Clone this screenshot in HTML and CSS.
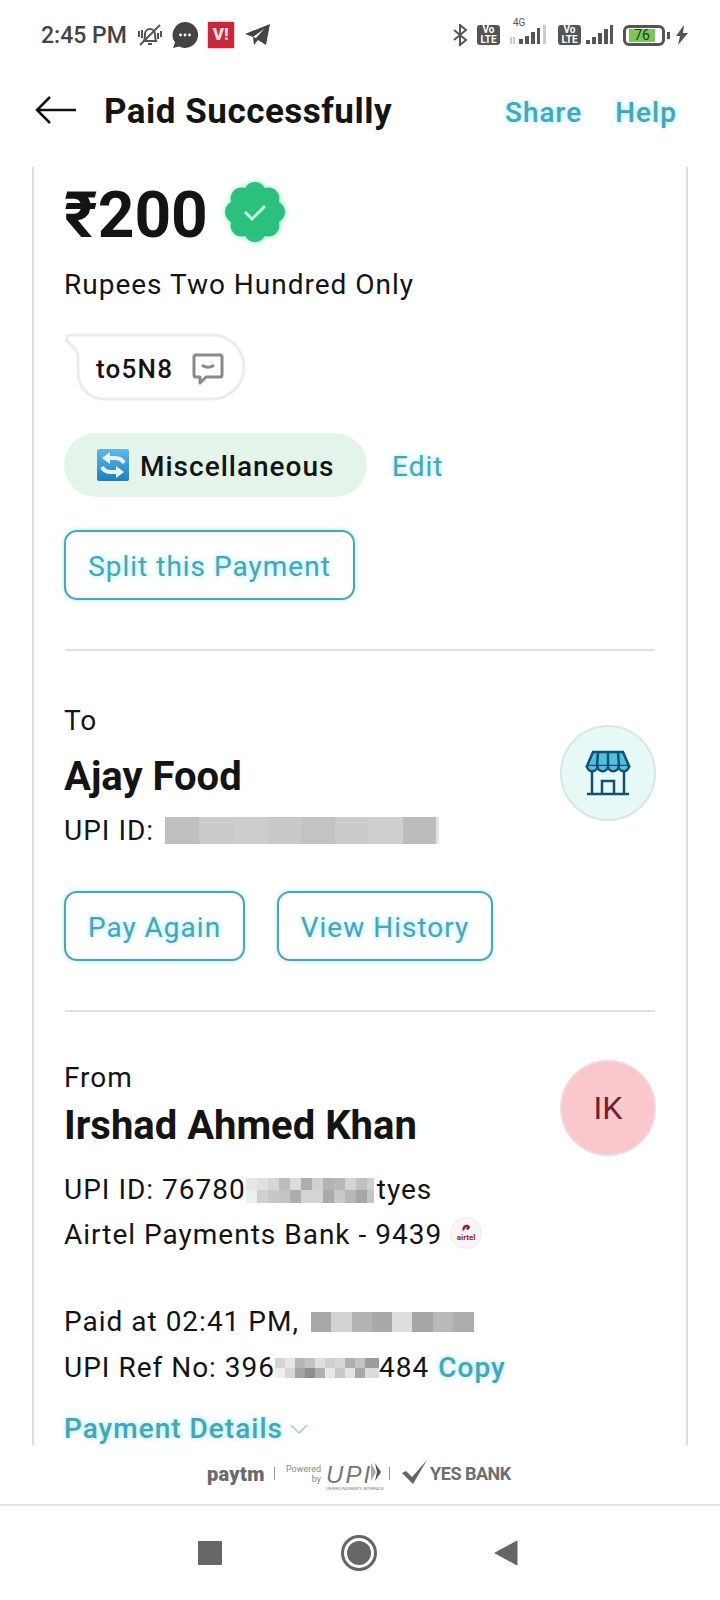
FILE: index.html
```html
<!DOCTYPE html>
<html>
	<head>
		<meta charset="UTF-8">
		<title>Paid Successfully</title>
		<link rel="stylesheet" href="styles.css">
	</head>
	<body>
		<div id="page">
			<div class="status">
				<span class="time">2:45 PM</span>
				<svg class="ic-bell" width="26" height="26" viewBox="0 0 26 26" fill="none" stroke="#555" stroke-width="2"><path d="M7 19c1-2 1-4 1-7a5 5 0 0 1 10 0c0 3 0 5 1 7z"/><path d="M11 22h4"/><path d="M3 23L23 3"/><path d="M2 9v6M5 8v8M24 9v6M21 11v6" stroke-width="2"/></svg>
				<svg class="ic-chat" width="26" height="26" viewBox="0 0 26 26"><path d="M13 0a13 13 0 1 1-6 24.500L1 26l2-5.500A13 13 0 0 1 13 0z" fill="#444"/><circle cx="8.500" cy="13" r="1.400" fill="#fff"/><circle cx="13" cy="13" r="1.400" fill="#fff"/><circle cx="17.500" cy="13" r="1.400" fill="#fff"/></svg>
				<div class="vi">V!</div>
				<svg class="ic-tg" width="25" height="22" viewBox="0 0 25 22"><path d="M25 0L21 21 13 16 9 21 8 13 0 10z" fill="#444"/><path d="M8 13L19 5 11 14z" fill="#fff"/></svg>
				<div class="status-right">
					<svg class="ic-bt" width="15" height="22" viewBox="0 0 15 22" fill="none" stroke="#555" stroke-width="2"><path d="M1 6l12 10-6 5V1l6 5L1 16"/></svg>
					<div class="volte volte-first">Vo<br>LTE</div>
					<div class="sig-wrap">
						<span class="four-g">4G</span>
						<svg width="38" height="20" viewBox="0 0 38 20"><path d="M1 12v7M4 12v7" stroke="#bbb" stroke-width="1.500"/><g fill="#555"><rect x="9" y="14" width="4" height="5"/><rect x="15" y="11" width="4" height="8"/><rect x="21" y="7" width="4" height="12"/><rect x="27" y="3" width="3" height="16"/></g><rect x="33" y="0" width="3" height="19" fill="#ccc"/></svg>
					</div>
					<div class="volte">Vo<br>LTE</div>
					<svg class="ic-sig" width="28" height="20" viewBox="0 0 28 20" fill="#555"><rect x="0" y="15" width="4" height="4"/><rect x="6" y="12" width="4" height="7"/><rect x="12" y="8" width="4" height="11"/><rect x="18" y="4" width="4" height="15"/><rect x="24" y="0" width="3" height="19"/></svg>
					<div class="batt"><span class="batt-fill">76</span></div>
					<span class="batt-nub"></span>
					<svg class="ic-bolt" width="12" height="20" viewBox="0 0 12 20"><path d="M8 0L0 11h4L2 20l10-12H7z" fill="#555"/></svg>
				</div>
			</div>

			<div class="top">
				<svg class="back" width="42" height="28" viewBox="0 0 42 28" fill="none" stroke="#111" stroke-width="2.500"><path d="M41 14H2M15 1L2 14l13 13"/></svg>
				<div class="title">Paid Successfully</div>
				<div class="link top-link top-share">Share</div>
				<div class="link top-link top-help">Help</div>
			</div>

			<div class="card">
				<div class="amount-row">
					<span class="amount">₹200</span>
					<svg class="badge" width="60" height="60" viewBox="0 0 60 60">
						<g fill="#2cc07f">
							<circle cx="30" cy="11" r="11"/><circle cx="43.400" cy="16.600" r="11"/><circle cx="49" cy="30" r="11"/><circle cx="43.400" cy="43.400" r="11"/>
							<circle cx="30" cy="49" r="11"/><circle cx="16.600" cy="43.400" r="11"/><circle cx="11" cy="30" r="11"/><circle cx="16.600" cy="16.600" r="11"/>
							<circle cx="30" cy="30" r="20"/>
						</g>
						<path d="M20 30l7 7 13-13" fill="none" stroke="#c8f7e0" stroke-width="3"/>
					</svg>
				</div>
				<div class="line words">Rupees Two Hundred Only</div>
				<div class="note">
					<svg class="note-shape" width="182" height="68" viewBox="0 0 182 68" fill="none" stroke="#ececec" stroke-width="3"><path d="M7 2H148a32 32 0 0 1 0 64H40a26 26 0 0 1-26-26V24Q14 17 3 8Q1 2 7 2Z"/></svg>
					<span class="note-text">to5N8</span>
					<svg width="32" height="32" viewBox="0 0 32 32" fill="none" stroke="#8a8a8a" stroke-width="3" stroke-linejoin="round"><path d="M4 2h24a2 2 0 0 1 2 2v18a2 2 0 0 1-2 2H14l-6 6v-6H4a2 2 0 0 1-2-2V4a2 2 0 0 1 2-2z"/><path d="M10 12c3 3 9 3 12 0"/></svg>
				</div>
				<div class="tag-row">
					<div class="tag">
						<svg width="32" height="32" viewBox="0 0 32 32">
							<defs><linearGradient id="swap" x1="0" y1="0" x2="0" y2="1"><stop offset="0" stop-color="#62b8e6"/><stop offset="1" stop-color="#1d7fbb"/></linearGradient></defs>
							<rect width="32" height="32" rx="2" fill="url(#swap)"/>
							<path d="M27 14c-2-4-5-5-9-5h-6" fill="none" stroke="#e8f1f5" stroke-width="4"/>
							<path d="M5 9l8-6v12z" fill="#e8f1f5"/>
							<path d="M5 18c2 4 5 5 9 5h6" fill="none" stroke="#e8f1f5" stroke-width="4"/>
							<path d="M27 23l-8-6v12z" fill="#e8f1f5"/>
						</svg>
						<span class="tag-text">Miscellaneous</span>
					</div>
					<span class="link line edit">Edit</span>
				</div>
				<div class="btn btn-split link">Split this Payment</div>
				<div class="rule rule-first"></div>

				<div class="party party-to">
					<div class="party-text">
						<div class="line">To</div>
						<div class="name name-to">Ajay Food</div>
						<div class="line line-upi">UPI ID: <span class="blur blur-to"></span></div>
					</div>
					<div class="avatar avatar-to">
						<svg width="46" height="46" viewBox="0 0 46 46">
							<path d="M8 2h30l6 14H2z" fill="#4fc0e0" stroke="#14506f" stroke-width="2.500"/>
							<path d="M2 16a5 5 0 0 0 10.500 0a5 5 0 0 0 10.500 0a5 5 0 0 0 10.500 0a5 5 0 0 0 10.500 0" fill="#4fc0e0" stroke="#14506f" stroke-width="2.500"/>
							<path d="M13 2l-1 14M23 2v14M33 2l1 14" stroke="#14506f" stroke-width="2.500"/>
							<path d="M7 22v22M39 22v22M2 44h42M17 44V31h12v13" fill="none" stroke="#14506f" stroke-width="2.500"/>
						</svg>
					</div>
				</div>
				<div class="btn-row">
					<div class="btn btn-again link">Pay Again</div>
					<div class="btn btn-history link">View History</div>
				</div>
				<div class="rule rule-second"></div>

				<div class="party party-from">
					<div class="party-text">
						<div class="line">From</div>
						<div class="name name-from">Irshad Ahmed Khan</div>
						<div class="line line-from-upi">UPI ID: 76780<span class="blur blur-from"></span>tyes</div>
						<div class="line line-bank">Airtel Payments Bank - 9439
							<span class="airtel">
								<svg width="10" height="9" viewBox="0 0 10 9"><path d="M2 7C0 3 4 0 7 1c3 1 2 4 0 5L5 5c1-1 1-2 0-2-1 1-1 3-3 4z" fill="#8e2230"/></svg>
								<span class="airtel-mark">airtel</span>
							</span>
						</div>
					</div>
					<div class="avatar avatar-from">IK</div>
				</div>
				<div class="line line-paid">Paid at 02:41 PM, <span class="blur blur-paid"></span></div>
				<div class="line line-ref">UPI Ref No: 396<span class="blur blur-ref"></span>484 <span class="link copy">Copy</span></div>
				<div class="line details link">Payment Details
					<svg width="20" height="12" viewBox="0 0 20 12" fill="none" stroke="#8fd0dc" stroke-width="1.500"><path d="M2 2l8 8 8-8"/></svg>
				</div>
			</div>

			<div class="logos">
				<span class="paytm">paytm</span>
				<span class="sep"></span>
				<span class="powered">Powered<br>by</span>
				<span class="upi-wrap">
					<span class="upi">UPI</span>
					<span class="upi-sub">UNIFIED PAYMENTS INTERFACE</span>
				</span>
				<svg class="upi-arrow" width="10" height="18" viewBox="0 0 10 18"><path d="M0 0l5 9-5 9z" fill="#aaa"/><path d="M4 0l6 9-6 9 2-9z" fill="#555"/></svg>
				<span class="sep sep-second"></span>
				<svg class="yes-check" width="25" height="24" viewBox="0 0 25 24"><path d="M0 13l4-2 6 6L25 0 11 24z" fill="#666"/></svg>
				<span class="yes">YES BANK</span>
			</div>

			<div class="nav">
				<div class="nav-square"></div>
				<div class="nav-home"><div class="nav-home-dot"></div></div>
				<svg width="24" height="26" viewBox="0 0 24 26"><path d="M23 1v24L1 13z" fill="#666" stroke="#666" stroke-linejoin="round"/></svg>
			</div>
		</div>
	</body>
</html>
```

FILE: styles.css
```css
body {
	margin: 0;
	padding: 0;
	background: #fff;
	font-family: Roboto, "Liberation Sans", sans-serif;
	color: #141414;
}
#page {
	width: 720px;
	height: 1600px;
	display: flex;
	flex-direction: column;
	overflow: hidden;
}

/* status bar */
.status {
	height: 70px;
	display: flex;
	align-items: center;
	padding: 0 32px 0 41px;
	box-sizing: border-box;
}
.time {
	font-size: 23px;
	font-weight: 500;
	color: #444;
}
.ic-bell {
	margin-left: 10px;
}
.ic-chat {
	margin-left: 9px;
}
.vi {
	width: 26px;
	height: 26px;
	margin-left: 10px;
	background: #c8283c;
	color: #f3dfe0;
	font-size: 17px;
	font-weight: 900;
	line-height: 24px;
	text-align: center;
	box-shadow: 0 0 2px #e0687a;
}
.ic-tg {
	margin-left: 11px;
}
.status-right {
	margin-left: auto;
	display: flex;
	align-items: center;
}
.volte {
	width: 23px;
	height: 20px;
	margin-left: 9px;
	border-radius: 3px;
	background: #555;
	color: #fff;
	font-size: 10px;
	font-weight: 700;
	line-height: 10px;
	text-align: center;
}
.volte-first {
	margin-right: 10px;
}
.sig-wrap {
	position: relative;
	margin-right: 1px;
	padding-top: 3px;
}
.four-g {
	position: absolute;
	left: 3px;
	top: -5px;
	font-size: 10px;
	color: #555;
}
.ic-sig {
	margin-left: 5px;
}
.batt {
	width: 42px;
	height: 21px;
	margin-left: 9px;
	box-sizing: border-box;
	border: 3px solid #555;
	border-radius: 6px;
	padding: 1px 0 1px 3px;
}
.batt-fill {
	display: block;
	width: 26px;
	height: 13px;
	background: #7cc65c;
	color: #1d3d16;
	font-size: 14px;
	line-height: 13px;
	text-align: center;
}
.batt-nub {
	width: 3px;
	height: 7px;
	margin-left: 2px;
	background: #555;
}
.ic-bolt {
	margin-left: 6px;
}

/* header */
.top {
	height: 97px;
	box-sizing: border-box;
	padding: 0 43px 17px 35px;
	display: flex;
	align-items: center;
}
.title {
	margin-left: 27px;
	margin-top: 2px;
	font-size: 35px;
	font-weight: 700;
	letter-spacing: .5px;
}
.link {
	color: #4ba3b5;
	text-shadow: 0 0 5px rgba(90, 230, 245, .7);
}
.top-link {
	margin-top: 4px;
	font-size: 28px;
	font-weight: 500;
	letter-spacing: 1px;
}
.top-share {
	margin-left: auto;
}
.top-help {
	margin-left: 33px;
}

/* card */
.card {
	flex: 1;
	min-height: 0;
	overflow: hidden;
	margin: 0 32px;
	border-left: 2px solid #ddd;
	border-right: 2px solid #ddd;
	padding: 13px 30px 0;
}
.amount-row {
	height: 64px;
	display: flex;
	align-items: center;
}
.amount {
	padding-top: 8px;
	font-size: 64px;
	font-weight: 700;
	line-height: 58px;
}
.badge {
	margin-left: 17px;
	filter: drop-shadow(0 0 3px #8ff0c8);
}
.line {
	box-sizing: border-box;
	height: 36px;
	padding-top: 4px;
	font-size: 28px;
	line-height: 32px;
	letter-spacing: 1px;
	white-space: nowrap;
}
.words {
	margin-top: 21px;
}
.note {
	width: 182px;
	height: 68px;
	margin-top: 32px;
	box-sizing: border-box;
	display: flex;
	align-items: center;
	padding: 3px 0 0 32px;
	gap: 19px;
	position: relative;
}
.note-shape {
	position: absolute;
	left: 0;
	top: 0;
}
.note-text {
	font-size: 26px;
	font-weight: 500;
	letter-spacing: 1.200px;
}
.tag-row {
	margin-top: 32px;
	display: flex;
	align-items: center;
}
.tag {
	width: 303px;
	height: 64px;
	box-sizing: border-box;
	padding-left: 33px;
	border-radius: 32px;
	background: #e4f4ea;
	display: flex;
	align-items: center;
	gap: 11px;
}
.tag-text {
	padding-top: 3px;
	font-size: 28px;
	font-weight: 500;
	letter-spacing: 1px;
}
.edit {
	margin-left: 25px;
	height: auto;
}
.btn {
	height: 70px;
	box-sizing: border-box;
	padding-top: 3px;
	display: flex;
	align-items: center;
	justify-content: center;
	border: 2px solid #5a9fae;
	border-radius: 13px;
	box-shadow: 0 0 4px #8cecf5, inset 0 0 3px #c3f5f9;
	font-size: 28px;
	letter-spacing: 1px;
}
.btn-split {
	width: 291px;
	margin-top: 33px;
}
.rule {
	height: 2px;
	margin: 0 1px;
	background: #dfdfdf;
}
.rule-first {
	margin-top: 49px;
}
.rule-second {
	margin-top: 49px;
}
.party {
	display: flex;
	justify-content: space-between;
}
.party-to {
	margin-top: 50px;
}
.party-from {
	margin-top: 46px;
}
.name {
	box-sizing: border-box;
	height: 44px;
	padding-top: 4px;
	font-size: 40px;
	font-weight: 700;
	line-height: 40px;
	white-space: nowrap;
}
.name-to {
	margin-top: 16px;
}
.name-from {
	margin-top: 8px;
}
.line-upi {
	margin-top: 14px;
	display: flex;
	align-items: center;
}
.line-from-upi {
	margin-top: 24px;
	display: flex;
	align-items: center;
}
.line-bank {
	margin-top: 9px;
	display: flex;
	align-items: center;
	gap: 8px;
}
.line-paid {
	margin-top: 51px;
	display: flex;
	align-items: center;
}
.line-ref {
	margin-top: 10px;
	display: flex;
	align-items: center;
}
.copy {
	margin-left: 9px;
	font-weight: 500;
}
.blur {
	display: inline-block;
	flex: none;
}
.blur-to {
	width: 274px;
	height: 27px;
	margin: -2px 0 0 11px;
	background: linear-gradient(to right, #c0c0c0 0 34px, #cbcbcb 34px 68px, #cdcdcd 68px 102px, #c9c9c9 102px 136px, #c3c3c3 136px 170px, #cbcbcb 170px 204px, #cfcfcf 204px 238px, #bcbcbc 238px 271px, #e4e4e4 271px);
}
.blur-from {
	width: 128px;
	height: 25px;
	margin-right: 3px;
	background:
		linear-gradient(to right, #e6e6e6 0 11px, #e0e0e0 11px 22px, #d6d6d6 22px 33px, #bcbcbc 33px 44px, #dcdcdc 44px 55px, #aeaeae 55px 66px, #d0d0d0 66px 77px, #b4b4b4 77px 88px, #b8b8b8 88px 99px, #d4d4d4 99px 110px, #c0c0c0 110px 121px, #d0d0d0 121px) 0 0 / 100% 12px no-repeat,
		linear-gradient(to right, #eeeeee 0 11px, #d0d0d0 11px 22px, #c8c8c8 22px 33px, #c4c4c4 33px 44px, #aeaeae 44px 55px, #d4d4d4 55px 66px, #d4d4d4 66px 77px, #aaaaaa 77px 88px, #c8c8c8 88px 99px, #b8b8b8 99px 110px, #a6a6a6 110px 121px, #c4c4c4 121px) 0 12px / 100% 13px no-repeat;
}
.blur-paid {
	width: 163px;
	height: 20px;
	margin-left: 12px;
	background: linear-gradient(to right, #a8a8a8 0 20px, #d2d2d2 20px 41px, #b4b4b4 41px 61px, #a9a9a9 61px 81px, #dedede 81px 101px, #a6a6a6 101px 122px, #b9b9b9 122px 142px, #adadad 142px);
}
.blur-ref {
	width: 104px;
	height: 20px;
	background:
		linear-gradient(to right, #d4d4d4 0 10px, #e6e6e6 10px 20px, #b6b6b6 20px 30px, #c2c2c2 30px 40px, #e0e0e0 40px 50px, #d0d0d0 50px 60px, #d8d8d8 60px 70px, #b0b0b0 70px 80px, #c4c4c4 80px 90px, #9c9c9c 90px) 0 0 / 100% 10px no-repeat,
		linear-gradient(to right, #f0f0f0 0 10px, #d8d8d8 10px 20px, #a4a4a4 20px 30px, #8e8e8e 30px 40px, #b0b0b0 40px 50px, #e8e8e8 50px 60px, #c8c8c8 60px 70px, #e4e4e4 70px 80px, #a8a8a8 80px 90px, #dcdcdc 90px) 0 10px / 100% 10px no-repeat;
}
.airtel {
	width: 32px;
	height: 32px;
	margin-top: -4px;
	border-radius: 50%;
	border: 1px solid #eee;
	box-sizing: border-box;
	background: #fdf4f4;
	display: flex;
	flex-direction: column;
	align-items: center;
	justify-content: center;
}
.airtel-mark {
	font-size: 8px;
	font-weight: 700;
	letter-spacing: 0;
	line-height: 9px;
	color: #8e2230;
}
.avatar {
	width: 96px;
	height: 96px;
	box-sizing: border-box;
	border-radius: 50%;
	display: flex;
	align-items: center;
	justify-content: center;
	flex: none;
}
.avatar-to {
	margin-top: 24px;
	background: #e6f9f7;
	border: 2px solid #d9e6e3;
}
.avatar-from {
	margin-top: 2px;
	background: #fac8cc;
	border: 2px solid #eedadc;
	color: #742229;
	font-size: 32px;
}
.btn-row {
	margin-top: 44px;
	display: flex;
	gap: 32px;
}
.btn-again {
	width: 181px;
}
.btn-history {
	width: 216px;
}
.details {
	margin-top: 25px;
	display: flex;
	align-items: center;
	gap: 6px;
	font-weight: 500;
}

/* logos */
.logos {
	height: 61px;
	box-sizing: border-box;
	padding: 0 0 2px 207px;
	display: flex;
	align-items: center;
	border-bottom: 2px solid #e8e8e8;
	color: #666;
}
.paytm {
	width: 56px;
	font-size: 20px;
	font-weight: 900;
	letter-spacing: .3px;
	color: #6a6a6a;
}
.sep {
	width: 1px;
	height: 13px;
	margin-left: 11px;
	background: #999;
}
.powered {
	margin-left: 11px;
	font-size: 9px;
	line-height: 10px;
	text-align: right;
	color: #888;
}
.upi-wrap {
	margin-left: 5px;
	display: flex;
	flex-direction: column;
	align-items: flex-start;
	width: 48px;
	padding-top: 8px;
}
.upi {
	font-family: "Liberation Sans", sans-serif;
	font-size: 24px;
	font-style: italic;
	line-height: 22px;
	letter-spacing: 2px;
	color: #777;
}
.upi-sub {
	font-size: 4px;
	line-height: 6px;
	white-space: nowrap;
	color: #777;
}
.upi-arrow {
	margin-left: -3px;
	margin-top: -3px;
}
.sep-second {
	margin-left: 8px;
}
.yes-check {
	margin-left: 12px;
	margin-top: -3px;
}
.yes {
	margin-left: 3px;
	font-size: 18px;
	font-weight: 700;
	letter-spacing: -.5px;
	color: #6e6e6e;
}

/* nav */
.nav {
	height: 94px;
	box-sizing: border-box;
	padding: 0 0 0 198px;
	display: flex;
	align-items: center;
	gap: 118px;
}
.nav-square {
	width: 24px;
	height: 24px;
	border-radius: 1px;
	background: #666;
}
.nav-home {
	width: 36px;
	height: 36px;
	margin: 0 -1px 0 1px;
	box-sizing: border-box;
	border: 3px solid #666;
	border-radius: 50%;
	padding: 3px;
}
.nav-home-dot {
	width: 24px;
	height: 24px;
	border-radius: 50%;
	background: #666;
}
```
